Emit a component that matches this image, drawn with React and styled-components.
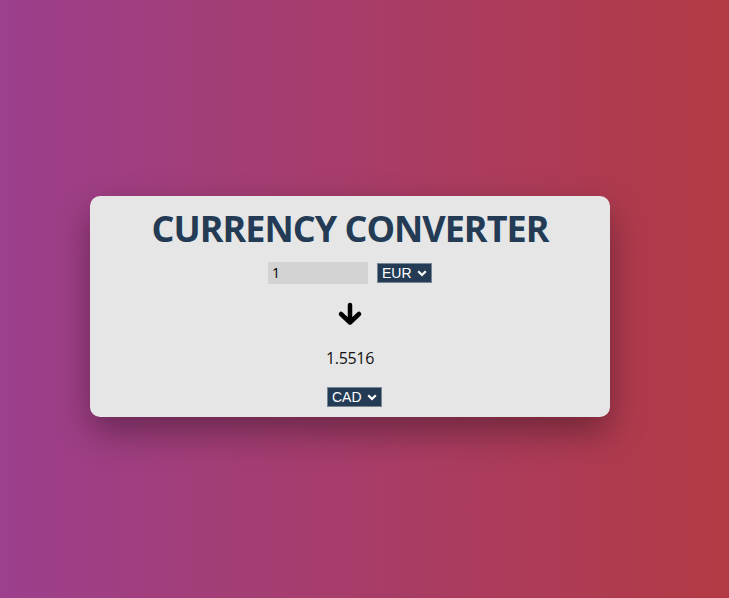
import React, { useState } from "react";
import styled, { createGlobalStyle } from "styled-components";

const GlobalStyle = createGlobalStyle`
  html, body {
    margin: 0;
    padding: 0;
  }
  body {
    font-family: "Open Sans", "Noto Sans", sans-serif;
    background: linear-gradient(to right, #9c3f8d, #b33a44);
    min-height: 100vh;
  }
`;

const RATES = { EUR: 1, CAD: 1.5516, USD: 1.1, GBP: 0.86 };

function App() {
  const [amount, setAmount] = useState("1");
  const [from, setFrom] = useState("EUR");
  const [to, setTo] = useState("CAD");

  const result = ((parseFloat(amount) || 0) * RATES[to]) / RATES[from];

  return (
    <Page>
      <GlobalStyle />
      <Card>
        <Title>CURRENCY CONVERTER</Title>
        <InputRow>
          <AmountInput value={amount} onChange={(e) => setAmount(e.target.value)} />
          <CurrencySelect value={from} onChange={setFrom} />
        </InputRow>
        <ArrowWrap>
          <ArrowDown />
        </ArrowWrap>
        <Result>{Number(result.toFixed(4))}</Result>
        <CurrencySelect value={to} onChange={setTo} shift={9} />
      </Card>
    </Page>
  );
}

export default App;

function CurrencySelect(props) {
  return (
    <SelectWrap $shift={props.shift || 0}>
      <Select value={props.value} onChange={(e) => props.onChange(e.target.value)}>
        {Object.keys(RATES).map((c) => (
          <option key={c} value={c}>
            {c}
          </option>
        ))}
      </Select>
      <Chevron />
    </SelectWrap>
  );
}

const Page = styled.div`
  min-height: 100vh;
  display: flex;
  justify-content: center;
  align-items: center;
  padding: 14px 29px 0 0;
  box-sizing: border-box;
`;

const Card = styled.div`
  width: 520px;
  box-sizing: border-box;
  background: #e6e6e6;
  border-radius: 10px;
  padding: 10px 0 10px;
  display: flex;
  flex-direction: column;
  align-items: center;
  box-shadow: 0 15px 35px rgba(0, 0, 0, 0.35);
`;

const Title = styled.h1`
  margin: 0;
  font-size: 36px;
  line-height: 46px;
  letter-spacing: -1px;
  font-weight: 700;
  color: #243b55;
`;

const InputRow = styled.div`
  margin-top: 10px;
  display: flex;
  align-items: center;
  gap: 9px;
`;

const AmountInput = styled.input`
  width: 100px;
  height: 22px;
  box-sizing: border-box;
  border: none;
  outline: none;
  background: #d3d3d3;
  padding: 0 4px;
  font-family: "Open Sans", sans-serif;
  font-size: 14px;
  color: #000;
`;

const SelectWrap = styled.div`
  position: relative;
  display: inline-flex;
  margin-left: ${(p) => p.$shift}px;
`;

const Select = styled.select`
  appearance: none;
  -webkit-appearance: none;
  height: 20px;
  width: 55px;
  box-sizing: border-box;
  background: #243b55;
  color: #fff;
  border: 1px solid #7a8593;
  border-radius: 0;
  padding: 0 0 0 4px;
  font-family: "Liberation Sans", Arial, sans-serif;
  font-size: 14px;
  line-height: 18px;
  outline: none;
`;

const ChevronSvg = styled.svg`
  position: absolute;
  right: 5px;
  top: 7px;
  pointer-events: none;
`;

const Chevron = () => (
  <ChevronSvg width="10" height="7" viewBox="0 0 10 7">
    <polyline points="1.2,1.2 5,5 8.8,1.2" fill="none" stroke="#fff" strokeWidth="2.2" />
  </ChevronSvg>
);

const ArrowWrap = styled.div`
  margin-top: 18px;
  width: 26px;
  height: 24px;
  display: flex;
  justify-content: center;
`;

const ArrowDown = () => (
  <svg width="26" height="24" viewBox="0 0 26 24">
    <path
      d="M13 3 L13 20 M4 12 L13 20.5 L22 12"
      fill="none"
      stroke="#000"
      strokeWidth="4.5"
      strokeLinecap="round"
      strokeLinejoin="round"
    />
  </svg>
);

const Result = styled.div`
  margin: 21px 0 18px;
  font-size: 16px;
  line-height: 22px;
  letter-spacing: -0.3px;
  color: #111;
`;
